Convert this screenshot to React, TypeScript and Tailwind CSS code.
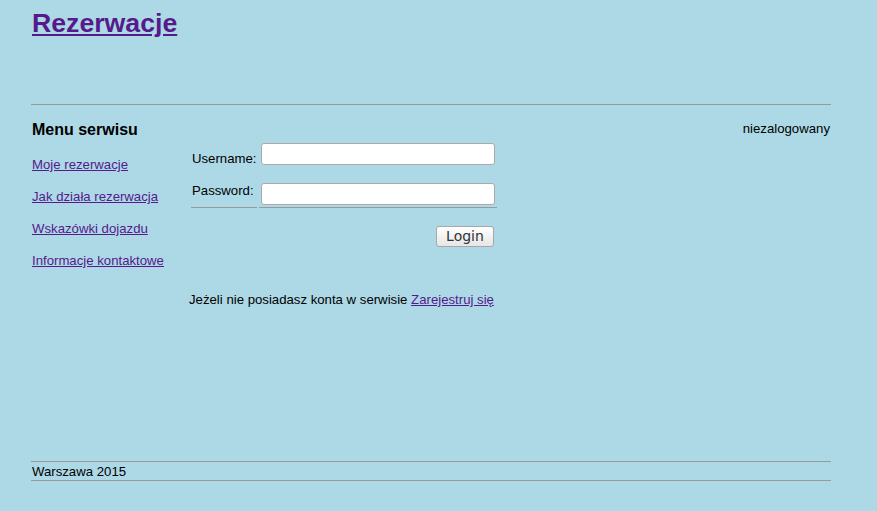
import React from "react"

const links = [
  "Moje rezerwacje",
  "Jak działa rezerwacja",
  "Wskazówki dojazdu",
  "Informacje kontaktowe",
]

const App: React.FC = () => {
  return (
    <div className="min-h-screen bg-[#add8e6] text-[13.2px] leading-[15px] text-black font-['Liberation_Sans',Arial,sans-serif]">
      <div className="ml-[31px] w-[800px]">
        <header className="h-[105px] border-b border-[#9a9a9a] pl-[1px] pt-2">
          <h1 className="text-[26.67px] leading-[30px] font-bold">
            <a href="#" className="text-[#551a8b] underline">
              Rezerwacje
            </a>
          </h1>
        </header>

        <main className="flex h-[356px]">
          <nav className="w-[158px] pl-[1px]">
            <h2 className="mt-[16px] text-[16px] leading-[18px] font-bold">Menu serwisu</h2>
            <ul className="mt-[18px] flex flex-col gap-[17px]">
              {links.map((l) => (
                <li key={l}>
                  <a href="#" className="text-[#551a8b] underline">
                    {l}
                  </a>
                </li>
              ))}
            </ul>
          </nav>

          <section className="flex-1 pt-[36px]">
            <form className="ml-[2px] w-[306px]" onSubmit={(e) => e.preventDefault()}>
              <div className="flex">
                <label className="w-[67px] pl-[1px] pt-[10px]">Username:</label>
                <div className="ml-[2px] w-[238px] p-[2px]">
                  <input
                    type="text"
                    className="block h-[22px] w-[234px] rounded-[3px] border border-[#aaaaaa] bg-white outline-none"
                  />
                </div>
              </div>
              <div className="mt-[14px] flex">
                <label className="w-[67px] border-b border-[#9a9a9a] pl-[1px] pt-[2px]">Password:</label>
                <div className="ml-[2px] w-[238px] border-b border-[#9a9a9a] px-[2px] pb-[2px] pt-[2px]">
                  <input
                    type="password"
                    className="block h-[22px] w-[234px] rounded-[3px] border border-[#aaaaaa] bg-white outline-none"
                  />
                </div>
              </div>
              <div className="mt-[18px] flex justify-end pr-[3px]">
                <button
                  type="submit"
                  className="h-[21px] w-[58px] rounded-[3px] border border-[#a8a8a8] bg-gradient-to-b from-white to-[#e6e6e6] text-[14px] leading-[19px] text-[#333] font-['DejaVu_Sans',sans-serif]"
                >
                  Login
                </button>
              </div>
            </form>
            <p className="mt-[45px]">
              Jeżeli nie posiadasz konta w serwisie{" "}
              <a href="#" className="text-[#551a8b] underline">
                Zarejestruj się
              </a>
            </p>
          </section>

          <div className="pr-[1px] pt-[16px] text-right">niezalogowany</div>
        </main>

        <footer className="border-y border-[#9a9a9a] pl-[1px] pt-[2px] pb-[1px]">Warszawa 2015</footer>
      </div>
    </div>
  )
}

export default App
